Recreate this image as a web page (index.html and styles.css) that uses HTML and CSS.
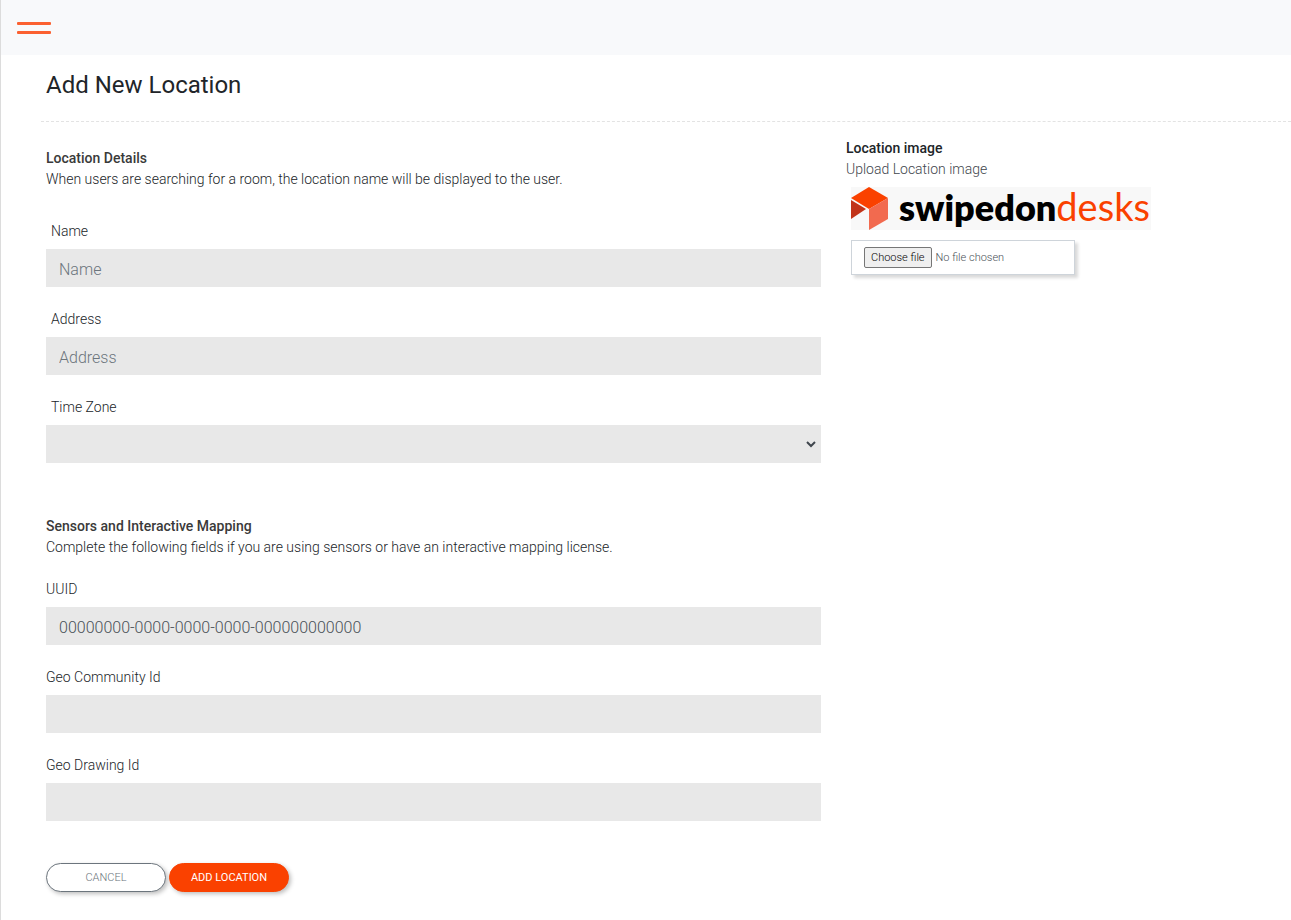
FILE: index.html
```
<!DOCTYPE html>
<html lang="en">
<head>
    <meta charset="UTF-8">
    <meta name="viewport" content="width=device-width, initial-scale=1.0">
    <title>Add New Location</title>
    <link rel="stylesheet" href="styles.css">
</head>
<body>
    <header class="topbar">
        <button type="button" class="menu-toggle" aria-label="Toggle menu">
            <span></span>
            <span></span>
        </button>
    </header>

    <main class="content">
        <h1>Add New Location</h1>

        <form class="location-form">
            <div class="fields">
                <section class="details">
                    <h2>Location Details</h2>
                    <p>When users are searching for a room, the location name will be displayed to the user.</p>
                    <div class="form-group">
                        <label for="name">Name</label>
                        <input type="text" id="name" name="name" placeholder="Name">
                    </div>
                    <div class="form-group">
                        <label for="address">Address</label>
                        <input type="text" id="address" name="address" placeholder="Address">
                    </div>
                    <div class="form-group">
                        <label for="timezone">Time Zone</label>
                        <div class="select-wrap">
                            <select id="timezone" name="timezone">
                                <option value=""></option>
                                <option value="utc">UTC</option>
                            </select>
                            <svg class="chevron" viewBox="0 0 10 7" aria-hidden="true">
                                <path d="M1 1l4 4 4-4" fill="none" stroke="#3f464d" stroke-width="2"/>
                            </svg>
                        </div>
                    </div>
                </section>

                <section class="mapping">
                    <h2>Sensors and Interactive Mapping</h2>
                    <p>Complete the following fields if you are using sensors or have an interactive mapping license.</p>
                    <div class="form-group">
                        <label for="uuid">UUID</label>
                        <input type="text" id="uuid" name="uuid" value="00000000-0000-0000-0000-000000000000">
                    </div>
                    <div class="form-group">
                        <label for="community">Geo Community Id</label>
                        <input type="text" id="community" name="community">
                    </div>
                    <div class="form-group">
                        <label for="drawing">Geo Drawing Id</label>
                        <input type="text" id="drawing" name="drawing">
                    </div>
                </section>

                <div class="actions">
                    <button type="button" class="btn btn-cancel">CANCEL</button>
                    <button type="submit" class="btn btn-add">ADD LOCATION</button>
                </div>
            </div>

            <section class="image-panel">
                <h2>Location image</h2>
                <p>Upload Location image</p>
                <div class="logo">
                    <svg class="logo-mark" viewBox="0 0 37 43" aria-hidden="true">
                        <path d="M0 11L18 0l19 11-19 11z" fill="#fa4100"/>
                        <path d="M0 13l15 9L0 32z" fill="#c13319"/>
                        <path d="M37 11v21L18 43V22z" fill="#f26a4f"/>
                    </svg>
                    <span class="logo-text">swipedon<span class="logo-desks">desks</span></span>
                </div>
                <label class="file-box" for="image">
                    <input type="file" id="image" name="image">
                    <span class="file-button">Choose file</span>
                    <span class="file-name">No file chosen</span>
                </label>
            </section>
        </form>
    </main>
</body>
</html>
```
FILE: styles.css
```
* {
    box-sizing: border-box;
}
body {
    margin: 0;
    min-height: 100vh;
    border-left: 1px solid #dcdcdc;
    background-color: #fff;
    color: #212529;
    font-family: Roboto, "Liberation Sans", sans-serif;
    font-size: 14px;
    font-weight: 300;
    line-height: 21px;
}
h1, h2, p {
    margin: 0;
}
.topbar {
    display: flex;
    align-items: center;
    height: 55px;
    padding: 0 16px;
    background-color: #f8f9fb;
}
.menu-toggle {
    display: flex;
    flex-direction: column;
    gap: 6px;
    width: 34px;
    padding: 0;
    border: none;
    background: none;
    cursor: pointer;
}
.menu-toggle span {
    height: 3px;
    border-radius: 1px;
    background-color: #fb6030;
}
.content {
    padding-left: 40px;
}
h1 {
    padding: 15px 5px 21px;
    border-bottom: 1px dashed #e3e3e3;
    color: #212529;
    font-size: 24px;
    font-weight: 400;
    line-height: 30px;
}
h2 {
    color: #3a3a3a;
    font-size: 14px;
    font-weight: 500;
    line-height: 21px;
}
.location-form {
    display: flex;
    gap: 15px;
}
.fields {
    flex: 0 0 62.8%;
    padding: 26px 5px;
}
.form-group {
    margin-bottom: 22px;
}
.form-group label {
    display: block;
    margin-bottom: 7px;
}
.details .form-group label {
    padding-left: 5px;
}
.details p {
    margin-bottom: 31px;
}
.mapping {
    margin-top: 53px;
}
.mapping p {
    margin-bottom: 21px;
}
input[type="text"], select {
    display: block;
    width: 100%;
    height: 38px;
    padding: 2px 13px 0;
    border: none;
    border-radius: 0;
    background-color: #e8e8e8;
    color: #495057;
    font-family: inherit;
    font-size: 16px;
    font-weight: 300;
}
input::placeholder {
    color: #6c757d;
    opacity: 1;
}
select {
    appearance: none;
}
.select-wrap {
    position: relative;
}
.chevron {
    position: absolute;
    top: 16px;
    right: 5px;
    width: 10px;
    height: 7px;
    pointer-events: none;
}
.actions {
    display: flex;
    gap: 3px;
    padding-top: 20px;
}
.btn {
    width: 120px;
    height: 29px;
    padding: 0;
    border: 1px solid #6c757d;
    border-radius: 15px;
    box-shadow: 2px 2px 4px rgba(0, 0, 0, 0.25);
    font-family: inherit;
    font-size: 11px;
    font-weight: 300;
    cursor: pointer;
}
.btn-cancel {
    background-color: #fff;
    color: #6c757d;
}
.btn-add {
    border-color: #fa4100;
    background-color: #fa4100;
    color: #fff;
    font-weight: 400;
}
.image-panel {
    flex: 1;
    padding: 16px 5px;
}
.image-panel h2 {
    color: #212529;
}
.image-panel p {
    color: #3f464d;
}
.logo {
    display: flex;
    align-items: flex-start;
    gap: 11px;
    width: 300px;
    height: 43px;
    margin: 7px 5px 10px;
    background-color: #f8f8f8;
}
.logo-mark {
    flex: none;
    width: 37px;
    height: 43px;
}
.logo-text {
    color: #000;
    font-family: Lato, "Liberation Sans", sans-serif;
    font-size: 36px;
    font-weight: 800;
    line-height: 38px;
    white-space: nowrap;
}
.logo-desks {
    color: #fa4100;
    font-size: 38px;
    font-weight: 400;
}
.file-box {
    position: relative;
    display: flex;
    align-items: center;
    gap: 4px;
    width: 224px;
    height: 35px;
    margin-left: 5px;
    padding: 0 12px;
    border: 1px solid #ced4da;
    box-shadow: 3px 3px 3px rgba(0, 0, 0, 0.15);
    font-size: 11px;
    cursor: pointer;
}
.file-box input {
    position: absolute;
    inset: 0;
    width: 100%;
    opacity: 0;
}
.file-button {
    padding: 0 6px;
    border: 1px solid #767676;
    border-radius: 2px;
    background-color: #efefef;
    color: #000;
    line-height: 19px;
}
.file-name {
    color: #495057;
}
```
